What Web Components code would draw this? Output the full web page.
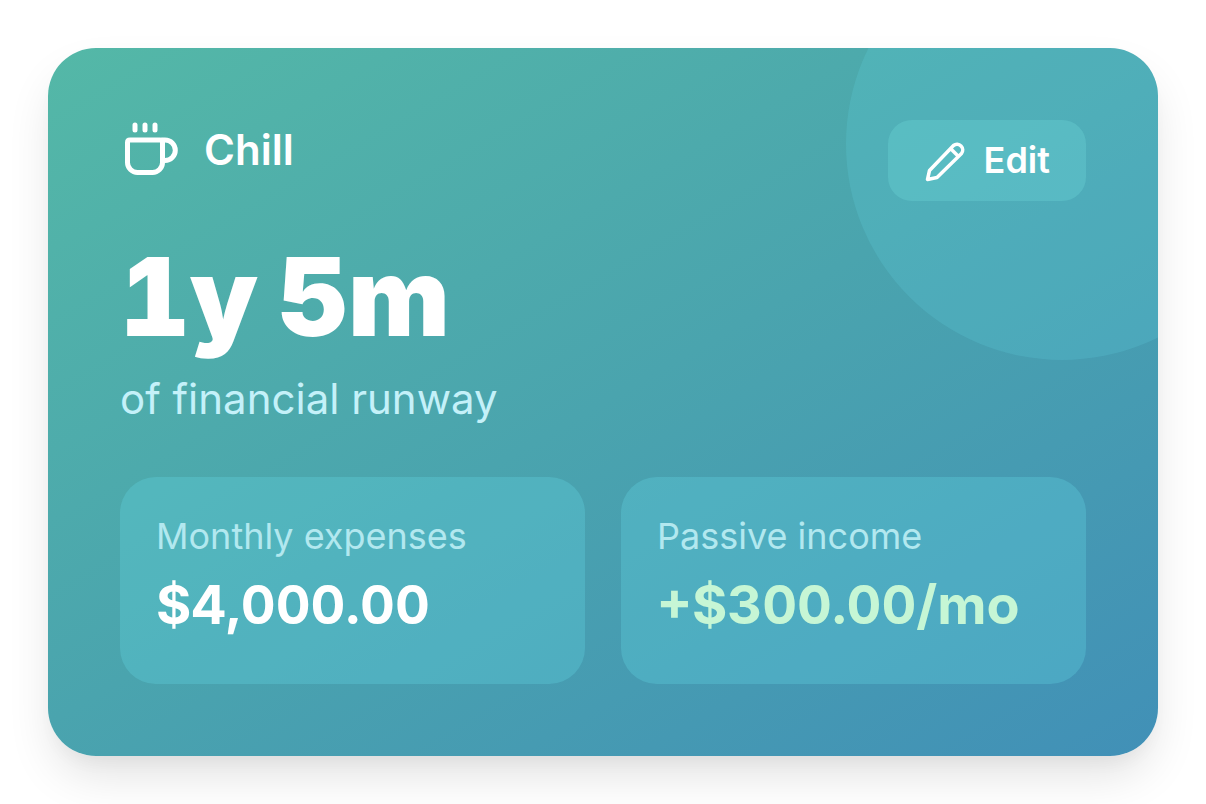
<!DOCTYPE html>
<html lang="en">
<head>
<meta charset="utf-8">
<meta name="viewport" content="width=device-width, initial-scale=1">
<title>Financial runway</title>
<style>
body { margin: 0; padding: 48px; background: #fff; font-family: Inter, "Liberation Sans", sans-serif; color: #fff; }
</style>
</head>
<body>
<runway-card>
  <status-label slot="status">Chill</status-label>
  <edit-button slot="action">Edit</edit-button>
  <span slot="duration">1y</span> <span slot="duration">5m</span>
  <span slot="caption">of financial runway</span>
  <stat-tile><span slot="label">Monthly expenses</span>$4,000.00</stat-tile>
  <stat-tile class="gain"><span slot="label">Passive income</span>+$300.00/mo</stat-tile>
</runway-card>
<script>
class ShadowElement extends HTMLElement {
  constructor() {
    super();
    this.attachShadow({ mode: 'open' }).innerHTML = this.constructor.markup;
  }
}

class RunwayCard extends ShadowElement {
  static markup = `
    <style>
      :host { display: block; position: relative; overflow: hidden; padding: 72px; border-radius: 48px;
        background: linear-gradient(150deg, #54b8a7 0%, #4aa4ae 50%, #4190b7 100%);
        box-shadow: 0 24px 48px -6px rgba(0, 0, 0, .12), 0 12px 18px -6px rgba(0, 0, 0, .04); }
      .glow { position: absolute; top: -120px; right: -120px; width: 432px; height: 432px; border-radius: 50%;
        background: rgba(99, 214, 230, .2); }
      section { position: relative; }
      header { display: flex; justify-content: space-between; align-items: flex-start; }
      h1 { display: flex; gap: 20px; margin: 36px 0 0; font-size: 108px; line-height: 120px; font-weight: 900; font-variant-numeric: tabular-nums; }
      p { margin: 16px 0 0; font-size: 42px; line-height: 52px; color: #c4f1f9; }
      .stats { display: grid; grid-template-columns: repeat(auto-fit, minmax(400px, 1fr)); gap: 36px; margin-top: 52px; }
    </style>
    <div class="glow"></div>
    <section>
      <header><slot name="status"></slot><slot name="action"></slot></header>
      <h1><slot name="duration"></slot></h1>
      <p><slot name="caption"></slot></p>
      <div class="stats"><slot></slot></div>
    </section>`;
}

class StatusLabel extends ShadowElement {
  static markup = `
    <style>
      :host { display: flex; align-items: center; gap: 24px; font-size: 42px; line-height: 60px; font-weight: 600; }
      svg { width: 60px; height: 60px; fill: none; stroke: currentColor; stroke-width: 5; stroke-linecap: round; stroke-linejoin: round; }
    </style>
    <svg viewBox="0 0 60 60" aria-hidden="true">
      <path d="M10 20H40Q42.500 20 42.500 22.500V42.500A10 10 0 0 1 32.500 52.500H17.500A10 10 0 0 1 7.500 42.500V22.500Q7.500 20 10 20Z"/>
      <path d="M42.500 20H45A10.300 10.300 0 0 1 45 40.600H42.500M15 5V10M25 5V10M35 5V10"/>
    </svg>
    <span><slot></slot></span>`;
}

class EditButton extends ShadowElement {
  static markup = `
    <style>
      :host { display: block; }
      button { display: flex; align-items: center; gap: 18px; margin: 0; padding: 18px 36px; border: 0; border-radius: 24px;
        background: rgba(112, 217, 217, .3); color: inherit; font: inherit; font-size: 36px; line-height: 45px; font-weight: 600; cursor: pointer; }
      svg { width: 42px; height: 42px; fill: none; stroke: currentColor; stroke-width: 3.500; stroke-linecap: round; stroke-linejoin: round; }
    </style>
    <button type="button">
      <svg viewBox="0 0 42 42" aria-hidden="true">
        <path d="M3.500 39.500L5.500 30.500L29.500 5.500A5.700 5.700 0 0 1 37.500 13.500L13 37.500ZM26.500 8.500L34.500 16.500"/>
      </svg>
      <slot></slot>
    </button>`;
}

class StatTile extends ShadowElement {
  static markup = `
    <style>
      :host { display: block; padding: 36px; border-radius: 36px; background: rgba(99, 214, 230, .3); }
      :host(.gain) { --value: #c6f6d5; }
      .label { font-size: 36px; line-height: 46px; color: #b2e8ef; }
      .value { margin: 6px 0 4px; font-size: 54px; line-height: 79px; font-weight: 700; font-variant-numeric: tabular-nums; color: var(--value, #fff); }
    </style>
    <div class="label"><slot name="label"></slot></div>
    <div class="value"><slot></slot></div>`;
}

customElements.define('runway-card', RunwayCard);
customElements.define('status-label', StatusLabel);
customElements.define('edit-button', EditButton);
customElements.define('stat-tile', StatTile);
</script>
</body>
</html>
